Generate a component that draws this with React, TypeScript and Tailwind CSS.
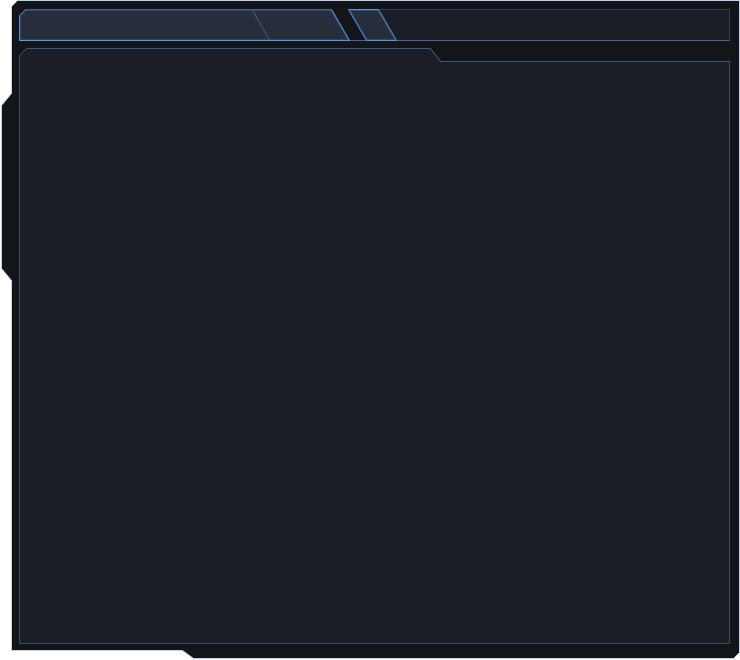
import React from "react";

function FrameShape() {
  return (
    <svg className="absolute inset-0" width={740} height={660} viewBox="0 0 740 660">
      <path
        d="M17.5 0.5 L739.5 0.5 L739.5 652.5 L733.5 658.5 L193.5 658.5 L182.5 650.5 L11.5 650.5 L11.5 280.5 L1.5 268.5 L1.5 105.5 L11.5 93.5 L11.5 6.5 Z"
        fill="#131519"
        stroke="#bcd2ef"
        strokeWidth={1}
      />
    </svg>
  );
}

function TabBar() {
  return (
    <div className="relative w-[711px] h-[32px]">
      <svg className="absolute inset-0" width={711} height={32} viewBox="0 0 711 32">
        <defs>
          <linearGradient id="tabfill" x1="0" y1="0" x2="0" y2="1">
            <stop offset="0" stopColor="#29303d" />
            <stop offset="1" stopColor="#262c38" />
          </linearGradient>
        </defs>
        {/* filler panel */}
        <path d="M359 0.5 L710.5 0.5 L710.5 31.5 L377 31.5 Z" fill="#1b1e24" />
        <path d="M359 0.5 L710.5 0.5 L710.5 31.5" fill="none" stroke="#2c425e" />
        <path d="M330 31.5 L710.5 31.5" stroke="#3a68a6" />
        {/* tab 1 */}
        <path
          d="M0.5 6.5 L6.5 0.5 L312.5 0.5 L330.5 31.5 L0.5 31.5 Z"
          fill="url(#tabfill)"
          stroke="#4a88dc"
          strokeOpacity={0.6}
        />
        <path d="M1.5 7 L7 1.5 L311.8 1.5 L328.7 30.5 L1.5 30.5 Z" fill="none" stroke="#4a80c8" strokeOpacity={0.3} />
        <path d="M0.5 31.5 L330.5 31.5" stroke="#529af0" />
        <path d="M0.5 6.5 L0.5 31.5 M0.5 6.5 L6.5 0.5" stroke="#4f8fe4" fill="none" />
        <path d="M312.5 0.5 L330.5 31.5" stroke="#5596ea" />
        <path d="M233 0.5 L250.5 31" stroke="#3e6294" />
        {/* tab 2 */}
        <path
          d="M329.5 0.5 L359.5 0.5 L377.5 31.5 L347.5 31.5 Z"
          fill="url(#tabfill)"
          stroke="#5596ea"
        />
        <path d="M331.2 1.5 L358.9 1.5 L375.8 30.5 L348.1 30.5 Z" fill="none" stroke="#4a80c8" strokeOpacity={0.35} />
      </svg>
    </div>
  );
}

function ContentPanel() {
  return (
    <div className="relative w-[711px] h-[596px]">
      <div className="absolute inset-0 bg-[#1b1e24] [clip-path:polygon(0_7px,7px_0,412px_0,422px_13px,100%_13px,100%_100%,0_100%)]" />
      <svg className="absolute inset-0" width={711} height={596} viewBox="0 0 711 596">
        <path
          d="M0.5 595.5 L0.5 7.5 L7.5 0.5 L411.5 0.5 L421.5 13.5 L710.5 13.5 L710.5 595.5 Z"
          fill="none"
          stroke="#3a5068"
        />
        <path d="M0.5 7.5 L7.5 0.5 L411.5 0.5 L421.5 13.5 L710.5 13.5" fill="none" stroke="#34598a" />
      </svg>
    </div>
  );
}

export default function App() {
  return (
    <div className="relative w-[740px] h-[660px] bg-white overflow-hidden font-['Liberation_Sans',sans-serif]">
      <FrameShape />
      <div className="relative flex flex-col gap-[7px] pl-[19px] pt-[9px]">
        <TabBar />
        <ContentPanel />
      </div>
    </div>
  );
}
